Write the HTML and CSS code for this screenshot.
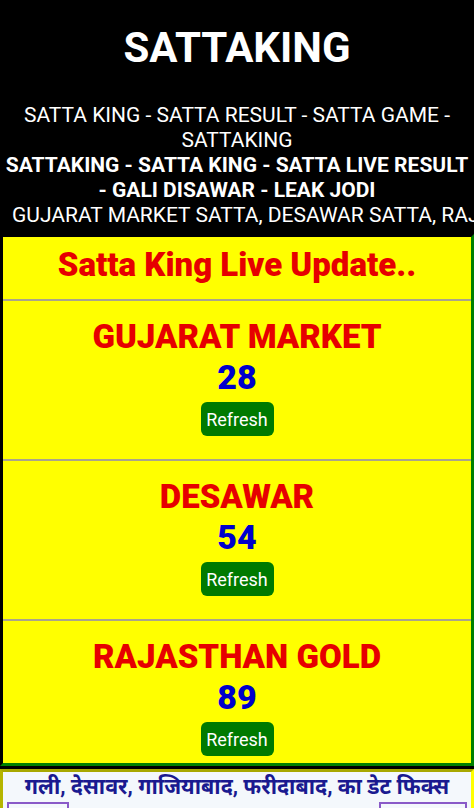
FILE: index.html
```html
<!DOCTYPE html>
<html lang="en">
<head>
    <meta charset="UTF-8">
    <meta name="viewport" content="width=device-width, initial-scale=1.0">
    <title>SATTAKING</title>
    <link rel="stylesheet" href="styles.css">
</head>
<body>
    <!-- Top black header -->
    <div class="header">
        <h1>SATTAKING</h1>
        <p class="tagline">SATTA KING - SATTA RESULT - SATTA GAME - SATTAKING</p>
        <p class="tagline bold">SATTAKING - SATTA KING - SATTA LIVE RESULT - GALI DISAWAR - LEAK JODI</p>
        <div class="ticker">GUJARAT MARKET SATTA, DESAWAR SATTA, RAJASTHAN GOLD SATTA, GALI SATTA</div>
    </div>

    <!-- Live results box -->
    <div class="live-box">
        <div class="live-title">Satta King Live Update..</div>

        <div class="game">
            <div class="game-name">GUJARAT MARKET</div>
            <div class="game-num">28</div>
            <button class="refresh">Refresh</button>
        </div>

        <div class="game">
            <div class="game-name">DESAWAR</div>
            <div class="game-num">54</div>
            <button class="refresh">Refresh</button>
        </div>

        <div class="game last">
            <div class="game-name">RAJASTHAN GOLD</div>
            <div class="game-num">89</div>
            <button class="refresh">Refresh</button>
        </div>
    </div>

    <!-- Date fix box -->
    <div class="fix-box">
        <div class="fix-title">गली, देसावर, गाजियाबाद, फरीदाबाद, का डेट फिक्स</div>
        <div class="fix-row">
            <span class="fix-tag">&nbsp;</span>
            <span class="fix-tag wide">&nbsp;</span>
        </div>
    </div>

    <script>
        // Refresh just reloads the page
        document.querySelectorAll('.refresh').forEach(btn => {
            btn.addEventListener('click', () => location.reload());
        });
    </script>
</body>
</html>
```

FILE: styles.css
```css
/* Global Styles */
body {
    margin: 0;
    padding: 0;
    background: #000;
    font-family: Roboto, 'Noto Sans', 'Noto Sans Devanagari', sans-serif;
    text-align: center;
    overflow: hidden;
}

/* Header */
.header {
    color: #fff;
    padding-bottom: 6px;
}

.header h1 {
    margin: 0;
    padding-top: 27px;
    font-size: 42px;
    line-height: 42px;
    font-weight: bold;
}

.tagline {
    margin: 0;
    font-size: 21px;
    line-height: 25px;
    padding: 0 14px;
}

.tagline:first-of-type {
    margin-top: 34px;
}

.tagline.bold {
    font-weight: bold;
    padding: 0 2px;
}

.ticker {
    white-space: nowrap;
    overflow: hidden;
    text-align: left;
    padding-left: 12px;
    font-size: 21px;
    line-height: 25px;
}

/* Live box */
.live-box {
    background: #ffff00;
    border: 3px inset #008000;
    border-left-color: #003a00;
    border-top-color: #003a00;
}

.live-title {
    color: #e60000;
    font-size: 33px;
    font-weight: 900;
    line-height: 40px;
    padding: 8px 0 14px;
    border-bottom: 2px solid #aaa58a;
}

.game {
    padding: 16px 0 23px;
    border-bottom: 2px solid #aaa58a;
}

.game.last {
    border-bottom: none;
    padding-bottom: 7px;
}

.game-name {
    color: #e60000;
    font-size: 33px;
    font-weight: 900;
    line-height: 40px;
}

.game-num {
    color: #0000cc;
    font-size: 34px;
    font-weight: 900;
    line-height: 40px;
}

.refresh {
    margin-top: 5px;
    background: #007a00;
    color: #fff;
    font-family: Roboto, sans-serif;
    font-size: 18px;
    border: none;
    border-radius: 6px;
    width: 73px;
    height: 34px;
    padding: 0;
    cursor: pointer;
}

/* Date fix box */
.fix-box {
    margin-top: 3px;
    background: #f4f8fc;
    border: 3px solid #ffff00;
    border-top-color: #a8a800;
    border-left-color: #b5b500;
    padding: 0 4px;
}

.fix-title {
    color: #1a1a90;
    font-size: 21.5px;
    font-weight: bold;
    line-height: 30px;
}

.fix-row {
    display: flex;
    justify-content: space-between;
}

.fix-tag {
    border: 2px solid #8a5ac8;
    width: 58px;
    height: 20px;
}

.fix-tag.wide {
    width: 84px;
}
```
